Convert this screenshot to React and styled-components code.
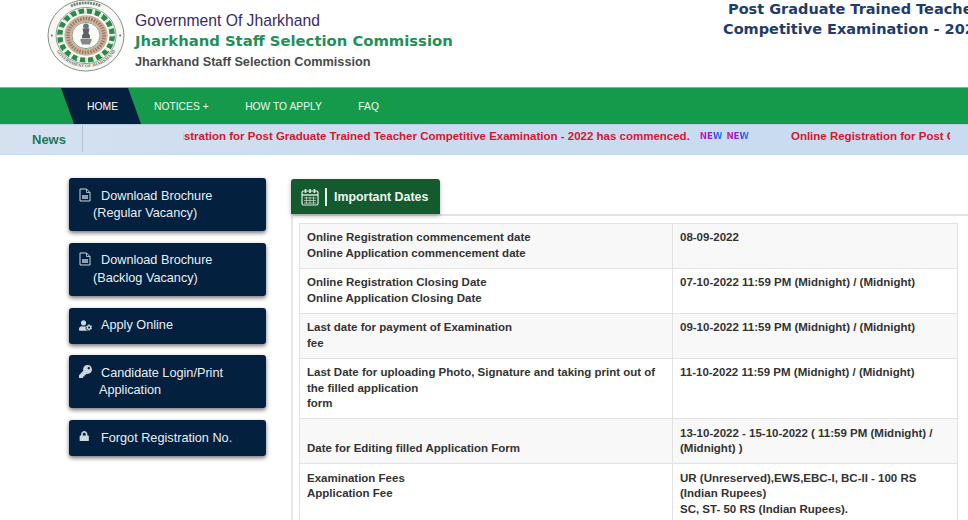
import React from "react";
import styled, { createGlobalStyle } from "styled-components";
import { FaKey, FaLock, FaUserCog } from "react-icons/fa";

const Global = createGlobalStyle`
  html, body { margin: 0; padding: 0; background: #fff; overflow: hidden; }
  * { box-sizing: border-box; }
`;

const Page = styled.div`
  width: 968px; height: 520px; overflow: hidden; background: #fff;
  font-family: "Liberation Sans", Arial, sans-serif;
`;
const Header = styled.header`
  height: 87px; display: flex; padding-left: 47px; position: relative;
`;
const LogoBox = styled.div`
  width: 78px; height: 73px; margin-top: -1px; flex: none;
`;
const Brand = styled.div`
  margin-left: 10px; padding-top: 12px; display: flex; flex-direction: column; flex: none;
`;
const Gov = styled.div`
  font-size: 15.7px; line-height: 17px; color: #3c2a68;
`;
const Commission = styled.div`
  font-family: "DejaVu Sans", sans-serif; font-weight: 700; font-size: 14.8px; line-height: 18px;
  margin-top: 3px; color: #1f9158; white-space: nowrap;
`;
const Sub = styled.div`
  font-size: 12.7px; font-weight: 700; line-height: 16px; margin-top: 4px; color: #4a4a4a; white-space: nowrap;
`;
const ExamTitle = styled.div`
  margin-left: auto; width: 245px; flex: none; overflow: hidden; white-space: nowrap;
  font-family: "DejaVu Sans", sans-serif; font-weight: 700; font-size: 14.5px; line-height: 20px;
  color: #1f3c6b; margin-top: -1px; height: 60px;
`;
const ExamLine = styled.div`
  padding-left: ${(p) => p.$indent}px;
`;
const Nav = styled.nav`
  height: 37px; background: #159a4c; border-top: 1px solid #7cc46a; display: flex; padding-left: 61px; gap: 13px;
`;
const Home = styled.a`
  width: 80px; display: flex; align-items: center; justify-content: center; color: #fff;
  background: #03203f; font-size: 10.4px; padding-left: 3px;
  clip-path: polygon(0 0, 67px 0, 100% 100%, 13px 100%);
`;
const NavLinks = styled.div`
  display: flex; gap: 36.5px; align-items: center;
`;
const NavLink = styled.a`
  color: #eef7ef; font-size: 10.3px; white-space: nowrap;
`;
const NewsBar = styled.div`
  height: 31px; background: linear-gradient(90deg, #d5e1ef 0, #c9dbf1 45%, #c9dbf1 100%);
  border-top: 1px solid #b7cfe4; border-bottom: 1px solid #c4dcec;
  display: flex; align-items: stretch; position: relative;
`;
const NewsLabel = styled.div`
  width: 83px; flex: none; padding: 7px 0 0 32px; color: #1c7a5e; font-weight: 700; font-size: 13px;
  border-right: 1px solid #b3c4d6; margin-bottom: 2px;
`;
const Ticker = styled.div`
  margin-left: 100px; width: 767px; overflow: hidden; white-space: nowrap; height: 100%;
`;
const TickerTrack = styled.div`
  display: flex; align-items: center; height: 22px; margin-left: -63px;
  color: #d8152f; font-size: 11.5px; font-weight: 700;
`;
const TickerText = styled.span`
  flex: none;
`;
const NewTag = styled.span`
  flex: none; margin-left: ${(p) => p.$gap}px; font-family: "DejaVu Sans", sans-serif; font-size: 8.6px; font-weight: 700;
  background: linear-gradient(90deg, #f0109e, #6a28e0 55%, #1a8cf0);
  -webkit-background-clip: text; background-clip: text; color: transparent;
`;
const TickerNext = styled(TickerText)`
  margin-left: 42px;
`;
const Main = styled.main`
  display: flex; padding: 23px 0 0 69px; gap: 25px; align-items: flex-start;
`;
const Side = styled.aside`
  width: 197px; flex: none; display: flex; flex-direction: column; gap: 11.8px;
`;
const SideButton = styled.a`
  display: block; background: #03203f; border-radius: 3px; padding: 9.5px 10px 8.5px; min-height: 36px;
  box-shadow: 0 2px 4px rgba(0,0,0,.55); color: #e9eef3; font-size: 12.7px; line-height: 17.5px;
`;
const FirstLine = styled.div`
  display: flex; align-items: flex-start; white-space: nowrap;
`;
const IconSlot = styled.span`
  width: 22px; flex: none; display: block; color: #cdd6df; font-size: ${(p) => p.$size ?? 13}px; line-height: 0;
  padding-top: ${(p) => p.$top ?? 1}px;
`;
const NextLine = styled.div`
  padding-left: ${(p) => p.$indent}px; white-space: nowrap;
`;
const Content = styled.section`
  flex: 1; min-width: 0; padding-top: 1px;
`;
const Tab = styled.div`
  width: 149px; height: 35px; background: #135a2f; border-radius: 3px 3px 0 0; display: flex; align-items: center;
  padding-left: 10px; color: #eef2ee; font-size: 12.4px; font-weight: 700; box-shadow: 0 2px 4px rgba(0,0,0,.3);
  position: relative;
`;
const TabRule = styled.span`
  width: 2px; height: 18px; background: #e8eee8; margin: 0 7px 0 6px;
`;
const Panel = styled.div`
  border-top: 2px solid #e2e2e2; border-left: 2px solid #e6e6e6; padding: 7px 10px 0 6px;
`;
const Table = styled.table`
  width: 659px; border-collapse: collapse; table-layout: fixed; color: #333;
  font-size: 11.5px; font-weight: 700; line-height: 15.4px;
`;
const Row = styled.tr`
  background: ${(p) => (p.$alt ? "#f8f8f8" : "#fff")};
`;
const Cell = styled.td`
  border: 1px solid #e2e2e2; padding: 6.3px 7px 6.9px; vertical-align: ${(p) => p.$bottom ? "bottom" : "top"};
`;
const LeftCol = styled.col`
  width: 373px;
`;

function Logo() {
  const inner = [];
  for (let a = 0; a < 360; a += 18) inner.push(a);
  return (
    <svg viewBox="0 0 78 78" width="78" height="73" preserveAspectRatio="none" role="img" aria-label="Seal">
      <circle cx="39" cy="39" r="38" fill="#f7f8f4" stroke="#7d8c80" strokeWidth="1" />
      <circle cx="39" cy="39" r="30" fill="#fff" stroke="#6f8474" strokeWidth=".8" />
      <circle cx="39" cy="39" r="26.2" fill="none" stroke="#2b8a49" strokeWidth="5.4" strokeDasharray="6 2.2" />
      {inner.map((a) => (
        <rect key={a} x="38" y="11" width="2" height="5" fill="#d9e8d4" transform={`rotate(${a} 39 39)`} />
      ))}
      <circle cx="39" cy="39" r="18" fill="none" stroke="#cdb29c" strokeWidth="7.4" />
      <circle cx="39" cy="39" r="18" fill="none" stroke="#93705f" strokeWidth="3.6" strokeDasharray="1.3 1.5" />
      <circle cx="39" cy="39" r="14" fill="#fafaf6" stroke="#72907a" strokeWidth=".9" />
      <circle cx="39" cy="29" r="2.8" fill="#6e7172" />
      <path d="M35.5 31.5h7l-1 5 1.5 2.5v3h-8v-3l1.5-2.5z" fill="#5f6264" />
      <path d="M33.5 42.5h11v2l-1.6 4h-7.8l-1.6-4z" fill="#85888a" />
      <path id="sealBottom" d="M5.5 42a33.6 33.6 0 0 0 67 0" fill="none" />
      <text fontSize="4.6" fill="#5f6f64" fontFamily="Liberation Serif, serif" fontWeight="700">
        <textPath href="#sealBottom" startOffset="50%" textAnchor="middle">GOVERNMENT OF JHARKHAND</textPath>
      </text>
      <circle cx="4.8" cy="39" r="1" fill="#5f6f64" />
      <circle cx="73.2" cy="39" r="1" fill="#5f6f64" />
      <path d="M24 7.5a35 35 0 0 1 30 0" fill="none" stroke="#738076" strokeWidth="3" strokeDasharray="2 .8" />
    </svg>
  );
}

function FileIcon() {
  return (
    <svg width="12" height="14" viewBox="0 0 12 14" aria-hidden="true">
      <path d="M1 1h6.5L11 4.5V13H1z" fill="none" stroke="currentColor" strokeWidth="1" />
      <path d="M7.5 1v3.5H11" fill="none" stroke="currentColor" strokeWidth=".8" />
      <rect x="3" y="7" width="6" height="4" fill="currentColor" fillOpacity=".7" />
    </svg>
  );
}

function CalendarIcon() {
  return (
    <svg width="18" height="18" viewBox="0 0 18 18" aria-hidden="true" style={{ flex: "none" }}>
      <rect x="1" y="3" width="16" height="14" rx="1.5" fill="none" stroke="#e4ece4" strokeWidth="1.2" />
      <path d="M1 7h16" stroke="#e4ece4" strokeWidth="1.4" />
      <path d="M4.5 1v4M9 1v4M13.5 1v4" stroke="#e4ece4" strokeWidth="1.6" />
      <path d="M3 10h12M3 12.5h12M3 15h12M5.5 8.5v7.5M9 8.5v7.5M12.5 8.5v7.5" stroke="#cfdccf" strokeWidth=".7" />
    </svg>
  );
}

const buttons = [
  { icon: <FileIcon />, top: 0, first: "Download Brochure", next: "(Regular Vacancy)", indent: 14 },
  { icon: <FileIcon />, top: 0, first: "Download Brochure", next: "(Backlog Vacancy)", indent: 14 },
  { icon: <FaUserCog />, top: 2, first: "Apply Online" },
  { icon: <FaKey />, top: 0, first: "Candidate Login/Print", next: "Application", indent: 20 },
  { icon: <FaLock />, size: 10.5, top: 1, first: "Forgot Registration No." },
];

const rows = [
  [["Online Registration commencement date", "Online Application commencement date"], ["08-09-2022"]],
  [["Online Registration Closing Date", "Online Application Closing Date"], ["07-10-2022 11:59 PM (Midnight) / (Midnight)", ""]],
  [["Last date for payment of Examination", "fee"], ["09-10-2022 11:59 PM (Midnight) / (Midnight)"]],
  [["Last Date for uploading Photo, Signature and taking print out of", "the filled application", "form"], ["11-10-2022 11:59 PM (Midnight) / (Midnight)"]],
  [["Date for Editing filled Application Form"], ["13-10-2022 - 15-10-2022 ( 11:59 PM (Midnight) /", "(Midnight) )"], true],
  [["Examination Fees", "Application Fee"], ["UR (Unreserved),EWS,EBC-I, BC-II - 100 RS", "(Indian Rupees)", "SC, ST- 50 RS (Indian Rupees)."]],
];

function Lines({ items }) {
  return items.map((t, i) => (
    <React.Fragment key={i}>
      {i > 0 && <br />}
      {t}
    </React.Fragment>
  ));
}

export default function App() {
  return (
    <Page>
      <Global />
      <Header>
        <LogoBox><Logo /></LogoBox>
        <Brand>
          <Gov>Government Of Jharkhand</Gov>
          <Commission>Jharkhand Staff Selection Commission</Commission>
          <Sub>Jharkhand Staff Selection Commission</Sub>
        </Brand>
        <ExamTitle>
          <ExamLine $indent={5}>Post Graduate Trained Teacher</ExamLine>
          <ExamLine $indent={0}>Competitive Examination - 2022</ExamLine>
        </ExamTitle>
      </Header>
      <Nav>
        <Home>HOME</Home>
        <NavLinks>
          <NavLink>NOTICES +</NavLink>
          <NavLink>HOW TO APPLY</NavLink>
          <NavLink>FAQ</NavLink>
        </NavLinks>
      </Nav>
      <NewsBar>
        <NewsLabel>News</NewsLabel>
        <Ticker>
          <TickerTrack>
            <TickerText>Online Registration for Post Graduate Trained Teacher Competitive Examination - 2022 has commenced.</TickerText>
            <NewTag $gap={10}>NEW</NewTag>
            <NewTag $gap={4}>NEW</NewTag>
            <TickerNext>Online Registration for Post Graduate</TickerNext>
          </TickerTrack>
        </Ticker>
      </NewsBar>
      <Main>
        <Side>
          {buttons.map((b, i) => (
            <SideButton key={i}>
              <FirstLine>
                <IconSlot $size={b.size} $top={b.top}>{b.icon}</IconSlot>
                {b.first}
              </FirstLine>
              {b.next && <NextLine $indent={b.indent}>{b.next}</NextLine>}
            </SideButton>
          ))}
        </Side>
        <Content>
          <Tab>
            <CalendarIcon />
            <TabRule />
            Important Dates
          </Tab>
          <Panel>
            <Table>
              <colgroup><LeftCol /><col /></colgroup>
              <tbody>
                {rows.map(([l, r, bottom], i) => (
                  <Row key={i} $alt={i % 2 === 0}>
                    <Cell $bottom={bottom}><Lines items={l} /></Cell>
                    <Cell><Lines items={r} /></Cell>
                  </Row>
                ))}
              </tbody>
            </Table>
          </Panel>
        </Content>
      </Main>
    </Page>
  );
}
